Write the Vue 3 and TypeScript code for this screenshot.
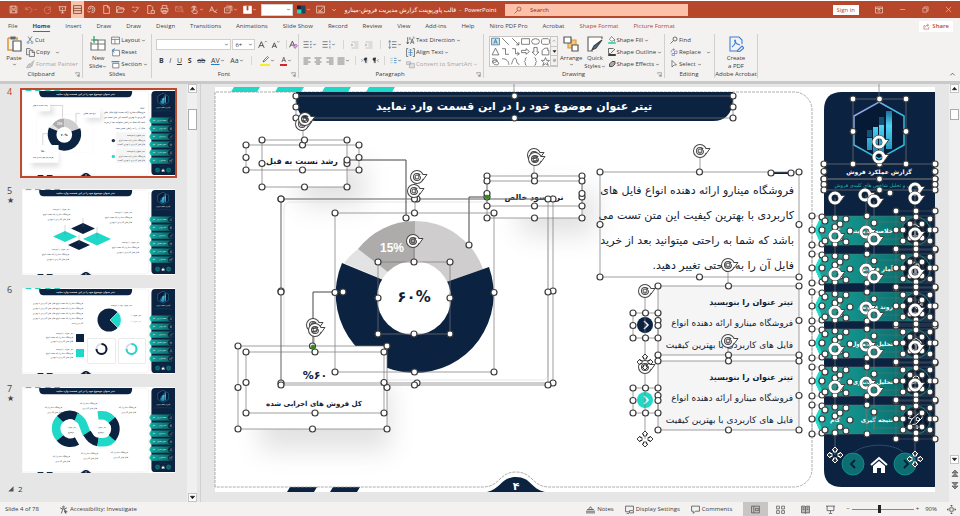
<script setup lang="ts">
import { h, type FunctionalComponent } from 'vue'

type Shape = [d: string, stroke?: string, fill?: string, width?: number]

const N = 'none'
const blue = '#2b7cc4'
const icons: Record<string, Shape[]> = {
  caret: [['M4 6l4 4 4-4', 'currentColor', N, 2]],
  chevUp: [['M3 10l5-5 5 5', 'currentColor', N, 1.6]],
  save: [['M2 2h11l1 1v11H2zM5 2v5h6V2M4 14v-5h8v5']],
  undo: [['M3 3v5h5M3 8c2-4 9-5 11 0 0 3-2 5-4 6']],
  redo: [['M13 3v5h-4M13 6a6 6 0 1 0 1 4']],
  present: [['M1 3h14M3 3v7h10V3M8 10v4M5 14h6M8 5v3']],
  rows: [['M1 1h14v14H1zM1 6h14M1 10h14', '#5a2a1a']],
  swirl: [['M8 8m-6 0a6 6 0 1 1 6 6M8 8m-3 0a3 3 0 1 1 3 3M1 10l2 3 3-2']],
  page: [['M3 1h7l3 3v11H3zM10 1v4h3']],
  folder: [['M1 13V3h5l1 2h6v2M1 13l3-6h11l-3 6z']],
  check: [['M2 4h4M8 4h4M3 9l4 4 7-9']],
  docs: [['M3 1h6l3 3v5M3 1v14h5M9 10h6v5H9z']],
  printer: [['M4 6V1h8v5M2 6h12v6H2zM5 10h6v5H5z']],
  mail: [['M1 3h11v8H1zM1 3l6 5 5-5M14 8v6']],
  touch: [['M6 15c-5-5-3-6 0-4V4c0-2 2-2 2 0v5c5 0 6 1 4 6zM3 6a4 4 0 1 1 8 0']],
  ab: [['M1 12l4-9 4 9M3 9h4M10 13l4-5M9 11l5 3']],
  album: [['M1 5h10v9H1zM4 2h10v9M4 9h4M11 5V2']],
  whitebox: [['M1 2h14v13H1z', '#fff', '#fff'], ['M7 2h2v7H7z', '#b7472a', '#b7472a']],
  theme: [['M0 1h8v7H0z', N, '#1a1f2c'], ['M0 8h8v7H0z', N, '#1fd3c5'], ['M8 1h7v14H8z', N, '#1f4358']],
  boxcheck: [['M1 2h14v12H1zM4 8l3 3 6-7M4 12h8']],
  ribbonmode: [['M1 2h14v12H1zM1 5h14M8 13V7M5 9l3-3 3 3']],
  min: [['M2 8h12']],
  restore: [['M2 5h9v9H2zM5 5V2h9v9h-3']],
  close: [['M2 2l12 12M14 2L2 14']],
  find: [['M10 2a4 4 0 1 1 0 8 4 4 0 0 1 0-8M7 9l-6 6', '#3b3a39', N, 1.4]],
  searchR: [['M10 2a4 4 0 1 1 0 8 4 4 0 0 1 0-8M7 9l-6 6', '#8a3420', N, 1.2]],
  share: [['M5 6H2v8h11V9M5 10c0-4 3-5 7-5M9 2l4 3-4 3', '#b7472a']],
  paste: [['M2 2h9v2M2 2v12h5', '#e09a3c', N, 1.6], ['M5 1h4v2H5z', '#666', '#666'], ['M7 5h8v10H7z', '#555', '#fff']],
  cut: [['M4 1l7 10M12 1L5 11', '#444'], ['M2 13a2 2 0 1 1 4 0 2 2 0 0 1-4 0M10 13a2 2 0 1 1 4 0 2 2 0 0 1-4 0', blue]],
  copy: [['M5 12H1V1h6l2 2M6 4h6l3 3v8H6zM11 4v4h4', '#444']],
  painter: [['M14 1L8 7l-4 1-3 6 7-1 3-3zM6 6l5 5', '#aaa', '#ccc']],
  newslide: [['M3 4h12v10H1V6', '#777', '#fff'], ['M1 8h14M8 4v10', '#777'], ['M4 0v7M1 4h7', '#2e9b63', N, 1.2]],
  layout: [['M1 2h14v12H1zM1 6h14M7 6v8', '#555', '#fff']],
  reset: [['M3 4h12v10H3z', '#555', '#fff'], ['M7 1L2 4l4 4', blue, N, 1.6]],
  section: [['M3 6h11v8H3z', '#555', '#fff'], ['M1 3h14', blue, N, 2]],
  growA: [['M1 14L6 3l5 11M3 10h6', '#333', N, 1.4], ['M12 4l2-2 2 2', blue]],
  shrinkA: [['M2 14L6 5l4 9M3 11h6', '#333', N, 1.4], ['M11 2l2 2 2-2', blue]],
  clearA: [['M1 13L6 2l5 11M3 9h6', '#333', N, 1.4], ['M8 12l4-5 3 3-4 5z', '#9b4fb0', '#d9a8e4']],
  bullets: [['M1 3h9M1 8h9M1 13h9', '#666', N, 1.4], ['M13 3h2M13 8h2M13 13h2', blue, N, 2.4]],
  numbers: [['M1 3h9M1 8h9M1 13h9', '#666', N, 1.4], ['M14 1v4M13 8h2M14 11v4', blue, N, 1.4]],
  indent: [['M1 2h14M7 6h8M7 10h8M1 14h14M1 6v4l3-2z', '#aaa']],
  spacing: [['M7 3h8M7 8h8M7 13h8', '#666', N, 1.4], ['M3 1v14M1 4l2-3 2 3M1 12l2 3 2-3', blue]],
  alignL: [['M1 2h14M1 6h9M1 10h14M1 14h9', '#555', N, 1.4]],
  alignC: [['M1 2h14M4 6h8M1 10h14M4 14h8', '#555', N, 1.4]],
  alignR: [['M1 2h14M6 6h9M1 10h14M6 14h9', '#555', N, 1.4]],
  alignJ: [['M1 2h14M1 6h14M1 10h14M1 14h14', '#555', N, 1.4]],
  ltr: [['M1 5l3 3-3 3', blue, N, 1.6], ['M10 14V2h4M13 2v12M10 2a3 3 0 0 0 0 6', '#333', '#333']],
  rtl: [['M15 5l-3 3 3 3', blue, N, 1.6], ['M5 14V2h4M8 2v12M5 2a3 3 0 0 0 0 6', '#333', '#333']],
  columns: [['M1 3h5M1 8h5M1 13h5', '#9bb', N, 1.6], ['M9 3h6M9 8h6M9 13h6', blue, N, 1.6]],
  textdir: [['M3 2v12M1 11l2 3 2-3M7 2v5', '#444', N, 1.3], ['M8 14l3-9 3 9M9 11h4', '#444'], ['M12 1l3 2-3 2', blue]],
  aligntext: [['M4 1H1v14h3M12 1h3v14h-3', '#444'], ['M8 2v12M5 5l3-3 3 3M5 11l3 3 3-3M4 8h8', blue]],
  smartart: [['M1 3h7v5H1zM6 6h9v8H6z', '#aaa', '#ddd']],
  arrange: [['M5 4h8v8H5z', '#e09a3c', '#f6c877'], ['M1 1h7v6H1zM9 9h6v6H9z', '#555', '#fff']],
  quick: [['M15 3v-2H1v14h5', '#666', '#fff'], ['M15 4L9 12l-4 2 2-4z', '#444', blue]],
  fill: [['M7 1l6 6-5 4-5-4zM13 7v4', '#444', '#fff'], ['M1 13h14v2H1z', '#1fd3a5', '#1fd3a5']],
  outline: [['M1 1h10M1 1v10h4M14 2L6 10', '#333', N, 1.4], ['M1 13h14v2H1z', '#111', '#111']],
  marker: [['M13 1L6 8l-2 4 4-2 7-7z', '#444', '#fff', 1.4]],
  effects: [['M3 8l5-5h6v5l-5 5H3z', '#333', '#aaa', 1.6]],
  replace: [['M2 9c0-5 3-6 6-6M6 1l3 2-3 2', blue], ['M9 6h5v5H9z', '#9b4fb0'], ['M4 11h5v4H4z', blue]],
  select: [['M4 1v13l4-4h5z', '#333', '#fff']],
  pdf: [['M14 8V4l-3-3H2v14h7M4 11c4-3 4-7 3-7s0 4 5 5M9 15l5-5 2 2-5 4z', '#3f7fd6', N, 1.1]],
  textbox: [['M1 2h14v12H1z', '#255f85', '#cfe6f2'], ['M5 12l3-8 3 8M6 9h4', '#255f85']],
  line: [['M2 2l12 12', '#444']],
  lineArrow: [['M2 2l12 12M14 9v5H9', '#444']],
  rect: [['M1 3h14v10H1z', '#444']],
  oval: [['M1 8a7 5 0 1 0 14 0 7 5 0 1 0-14 0', '#444']],
  round: [['M3 3h10l2 2v6l-2 2H3l-2-2V5z', '#444']],
  tri: [['M8 2l6 12H2z', '#444']],
  elbow: [['M2 3h6v10h6', '#444']],
  elbowA: [['M2 3h6v9h6M11 9l4 3-4 3', '#444']],
  arrR: [['M1 6h8V3l6 5-6 5v-3H1z', '#444']],
  arrD: [['M5 1h6v8h3l-6 6-6-6h3z', '#444']],
  blob: [['M2 6l5-4h5v4h2v8H2z', '#444']],
  scrib: [['M2 3c8 0 12 3 6 6s-6-5 0-3 8 8 2 8-8-4-7-8', '#444']],
  curve: [['M2 3c8 0 12 5 12 11', '#444']],
  arch: [['M1 13C5-2 9 0 10 8c1 5 4 5 5 5', '#444']],
  braceL: [['M10 1c-4 0-1 6-4 7 3 1 0 7 4 7', '#444']],
  braceR: [['M6 1c4 0 1 6 4 7-3 1 0 7-4 7', '#444']],
  star: [['M8 1l2 5h5l-4 4 2 5-5-3-5 3 2-5-4-4h5z', '#444']],
  more: [['M3 4h10M4 8l4 5 4-5z', '#444']],
  launch: [['M2 6V2h12v12h-4M5 7l6 6M11 8v5H6', '#555', N, 1.4]],
  access: [['M8 2a1.500 1.500 0 1 1 0 3 1.500 1.500 0 0 1 0-3M2 5l4 2v3l-2 5M14 5l-4 2v3l2 5M6 7h4M9 12h6M12 9v6', '#444', N, 1.4]],
  notes: [['M0 11h16M0 14h16M5 7l3-4 3 4M2 8h12', '#444', N, 1.4]],
  display: [['M1 2h14v7M1 2v10h6M8 14h7v-4H8zM3 15h4', '#444', N, 1.3]],
  comment: [['M1 2h14v9H8l-4 4v-4H1z', '#444', N, 1.3]],
  normal: [['M1 2h14v12H1zM5 2v12M8 6h5v4H8z', '#444', N, 1.2]],
  grid: [['M1 2h5v5H1zM10 2h5v5h-5zM1 10h5v5H1zM10 10h5v5h-5z', '#444', N, 1.2]],
  book: [['M1 2h6l1 1 1-1h6v12H9l-1 1-1-1H1zM8 3v12M3 5h3M3 8h3M10 5h3M10 8h3', '#444', '#bbb', 1.2]],
  show: [['M0 2h16M2 2v8h12V2M8 10v4M5 15h6', '#444', N, 1.3]],
  fit: [['M5 5h6v6H5zM8 0v3M6 2l2-2 2 2M8 16v-3M6 14l2 2 2-2M0 8h3M2 6L0 8l2 2M16 8h-3M14 6l2 2-2 2', '#444', N, 1.3]],
  up: [['M3 11l5-6 5 6z', '#111', '#111']],
  down: [['M3 5l5 6 5-6z', '#111', '#111']],
  dblUp: [['M2 8l6-6 6 6zM2 15l6-6 6 6z', '#444', '#888']],
  dblDown: [['M2 1l6 6 6-6zM2 8l6 6 6-6z', '#444', '#888']],
  fold: [['M14 2v12H2z', '#555', '#555']],
}

const Icon: FunctionalComponent<{ n: string; s?: number }> = (p) =>
  h('svg', { viewBox: '0 0 16 16', width: p.s ?? 9, height: p.s ?? 9, 'aria-hidden': 'true' },
    (icons[p.n] ?? []).map(([d, stroke, fill, w]) =>
      h('path', { d, stroke: stroke ?? 'currentColor', fill: fill ?? 'none', 'stroke-width': w ?? 1.2 })))
Icon.props = ['n', 's']

const tabs = ['File', 'Home', 'Insert', 'Draw', 'Draw', 'Design', 'Transitions', 'Animations', 'Slide Show', 'Record',
  'Review', 'View', 'Add-ins', 'Help', 'Nitro PDF Pro', 'Acrobat', 'Shape Format', 'Picture Format']

const gallery = ['textbox', 'line', 'lineArrow', 'rect', 'oval', 'round', 'tri', 'elbow', 'elbowA', 'arrR', 'arrD', 'blob',
  'scrib', 'curve', 'arch', 'braceL', 'braceR', 'star']

const menu = ['خلاصه مدیریتی', 'آمار فروش', 'روند فروش', 'تحلیل محصول', 'تحلیل مشتری', 'نتیجه گیری']
  .map((label, i) => ({ label, y: 216 + Math.round(i * 37.8) }))
const glyphs = [
  'M-5 4v-5M-1 4v-8M3 4v-6M-6 5h12M-5-5l4-2 4 3 4-3',
  'M-6 5h12M-4 4v-6h3v6M0 4v-9h3v9M-6-4l5-3',
  'M-6 4l4-5 3 3 5-7M2-5h4v4M-6 6h12',
  'M-5-2l5-4 5 4v6l-5 3-5-3zM-5-2l5 3 5-3M0 1v6',
  'M-3-3a3 3 0 1 1 6 0 3 3 0 0 1-6 0M-6 6c0-7 12-7 12 0zM4-6l3 2',
  'M-7 5l3-6 6-5 5-1-1 5-6 6zM-4-1l-4-1 4-3M1 5l0 4 4-5M1-3l3 2-2 2-2-1z',
]

type Box = [number, number, number, number]
type Point = [number, number]
const boxes: Box[] = [
  [296, 96, 437, 22], [246, 145, 113, 25], [262, 140, 85, 47], [281, 199, 272, 184], [281, 199, 267, 186],
  [335, 213, 159, 159], [378, 262, 72, 72], [487, 176, 95, 42], [487, 181, 95, 25], [238, 346, 149, 83],
  [246, 352, 138, 61], [600, 172, 199, 105], [658, 286, 141, 69], [658, 361, 141, 69],
  [633, 313, 25, 25], [633, 388, 25, 25], [853, 99, 53, 65], [824, 164, 111, 15], [824, 179, 111, 11],
]
const edge = (b: Box): Point[] => {
  const [x, y, w, hh] = b
  return [[x, y], [x + w / 2, y], [x + w, y], [x, y + hh / 2], [x + w, y + hh / 2], [x, y + hh], [x + w / 2, y + hh], [x + w, y + hh]]
}
const rowBoxes: Box[] = menu.flatMap(({ y }): Box[] => [
  [812, y, 55, 29], [822, y + 1, 27, 28], [825, y + 5, 15, 20], [867, y, 68, 29], [874, y + 6, 42, 17],
  [896, y - 5, 39, 39], [903, y + 3, 27, 24], [909, y + 8, 14, 14],
])
const rowColumns: [number, number[]][] = [
  [812, [0, 14, 29]], [822, [1, 14, 28]], [825, [5, 25]], [835, [2, 11, 28]], [840, [8, 22]], [846, [3, 26]], [850, [15]],
  [867, [0, 29]], [874, [7]], [896, [-5, 14, 34]], [903, [3, 14, 25]], [910, [8, 22]], [916, [-5, 1, 28, 34]],
  [922, [8, 22]], [930, [3, 14, 25]], [935, [-5, 14, 34]],
]
const rowPoints: Point[] = menu.flatMap(({ y }) => rowColumns.flatMap(([x, ys]) => ys.map((d): Point => [x, y + d])))
const loose: Point[] = [[347, 160], [406, 218], [469, 245], [343, 292], [771, 173], [791, 173], [890, 193]]
const handles: Point[] = [...boxes.flatMap(edge), ...rowPoints, ...loose]
const turns: [number, number, boolean][] = [
  [302, 124, false], [305, 119, false], [417, 177, false], [414, 191, false], [413, 241, false], [534, 155, false],
  [535, 159, false], [700, 151, false], [728, 265, false], [728, 341, false], [645, 291, false], [645, 367, false],
  [313, 325, false], [315, 330, false], [879, 142, true], [879, 157, true], [835, 198, true], [865, 195, true],
  [874, 201, true], [915, 189, true], [915, 198, true],
  ...menu.slice(0, 5).flatMap(({ y }): [number, number, boolean][] => [
    [835, y + 20, true], [866, y + 16, true], [874, y + 23, true], [915, y + 18, true]]),
]
const stems = ['M303 124V145', 'M415 177V213', 'M414 241V262', 'M534 159V176', 'M700 151V172', 'M728 265V286', 'M728 341V361',
  'M645 291V439', 'M314 330V352', 'M514 84V96', 'M879 84V99', 'M835 198V455', 'M866 195V420', 'M874 201V430', 'M915 189V459']
const moves: [number, number, boolean][] = [[645, 362, false], [645, 439, false], [835, 455, true], [915, 459, true]]

const para = ['فروشگاه مینارو ارائه دهنده انواع فایل های', 'کاربردی با بهترین کیفیت این متن تست می',
  'باشد  که شما به راحتی میتوانید بعد از خرید', 'فایل آن را به راحتی تغییر دهید.']
const cards = [{ y: 286, c: '#0b2341' }, { y: 361, c: '#1fd8c8' }]

const note = ['تیتر عنوان را بنویسید', 'فروشگاه مینارو ارائه دهنده انواع', 'فایل های کاربردی با بهترین']
const notes5: Point[] = [[48, 21], [110, 24], [117, 54], [47, 61]]
const notes7: Point[] = [[40, 21], [75, 17], [114, 21], [48, 70], [76, 67], [106, 66]]
const long6 = 'فروشگاه مینارو ارائه دهنده انواع فایل های کاربردی با بهترین'
const thumbs = [
  { n: 4, star: false }, { n: 5, star: true }, { n: 6, star: false }, { n: 7, star: true },
]
</script>

<template>
  <div class="app">
    <header class="titlebar">
      <div class="qat">
        <button aria-label="Save"><Icon n="save" /></button>
        <button class="dim" aria-label="Undo"><Icon n="undo" /><Icon n="caret" :s="5" /></button>
        <button class="dim" aria-label="Redo"><Icon n="redo" /></button>
        <button aria-label="From beginning"><Icon n="present" /></button>
        <button class="on" aria-label="Rows"><Icon n="rows" /></button>
        <button v-for="k in ['swirl', 'page', 'folder', 'check', 'docs', 'printer']" :key="k" :aria-label="k"><Icon :n="k" /></button>
        <button class="dim" aria-label="Mail"><Icon n="mail" /></button>
        <button aria-label="Touch mode"><Icon n="touch" /><Icon n="caret" :s="5" /></button>
        <button aria-label="Spelling"><Icon n="ab" /></button>
        <button aria-label="Album"><Icon n="album" /><Icon n="caret" :s="5" /></button>
        <button aria-label="Shape"><Icon n="whitebox" /><Icon n="caret" :s="5" /></button>
        <span class="combo qcombo"><select aria-label="Style"><option></option></select><Icon n="caret" :s="5" /></span>
        <button aria-label="Theme"><Icon n="theme" /><Icon n="caret" :s="5" /></button>
        <button aria-label="Options"><Icon n="boxcheck" /></button>
        <button aria-label="Customize"><Icon n="caret" :s="6" /></button>
      </div>
      <div class="doc"><bdi>قالب پاورپوینت گزارش مدیریت فروش-مینارو</bdi><span> &nbsp;-&nbsp; PowerPoint</span></div>
      <label class="search"><Icon n="searchR" :s="8" /><input type="text" aria-label="Search" placeholder="Search" /></label>
      <div class="win">
        <button class="sign">Sign in</button>
        <button aria-label="Ribbon display"><Icon n="ribbonmode" :s="8" /></button>
        <button aria-label="Minimize"><Icon n="min" :s="7" /></button>
        <button aria-label="Restore"><Icon n="restore" :s="7" /></button>
        <button aria-label="Close"><Icon n="close" :s="7" /></button>
      </div>
    </header>

    <nav class="tabs">
      <a v-for="(t, i) in tabs" :key="i" href="#" :class="{ cur: i === 1, ctx: i > 15 }">{{ t }}</a>
      <button class="share"><Icon n="share" :s="7" />Share</button>
    </nav>

    <section class="ribbon" aria-label="Home">
      <div class="group clip">
        <div class="tools">
          <button class="big"><Icon n="paste" :s="16" /><span>Paste</span><Icon n="caret" :s="5" /></button>
          <div class="stack">
            <button><Icon n="cut" :s="8" />Cut</button>
            <button><Icon n="copy" />Copy<Icon class="far" n="caret" :s="5" /></button>
            <button class="off"><Icon n="painter" />Format Painter</button>
          </div>
        </div>
        <footer>Clipboard<Icon class="launch" n="launch" :s="5" /></footer>
      </div>
      <div class="group slides">
        <div class="tools">
          <button class="big"><Icon n="newslide" :s="16" /><span>New</span><span>Slide<Icon n="caret" :s="5" /></span></button>
          <div class="stack">
            <button><Icon n="layout" />Layout<Icon n="caret" :s="5" /></button>
            <button><Icon n="reset" />Reset</button>
            <button><Icon n="section" />Section<Icon n="caret" :s="5" /></button>
          </div>
        </div>
        <footer>Slides</footer>
      </div>
      <div class="group font">
        <div class="lines">
          <div class="row">
            <span class="combo fname"><select aria-label="Font"><option></option></select><Icon n="caret" :s="5" /></span>
            <span class="combo fsize"><select aria-label="Font size"><option>6+</option></select><Icon n="caret" :s="5" /></span>
            <button class="wide" aria-label="Grow font"><Icon n="growA" /></button>
            <button class="wide" aria-label="Shrink font"><Icon n="shrinkA" /></button>
            <i class="bar"></i>
            <button aria-label="Clear formatting"><Icon n="clearA" /></button>
          </div>
          <div class="row fmt">
            <button><b>B</b></button><button><em>I</em></button><button><u>U</u></button><button><b>S</b></button>
            <button><s>ab</s></button>
            <button class="av">AV<Icon n="caret" :s="5" /></button>
            <button>Aa<Icon n="caret" :s="5" /></button>
            <i class="bar"></i>
            <button aria-label="Highlight"><span class="hl"><Icon n="marker" :s="8" /></span><Icon n="caret" :s="5" /></button>
            <button><span class="col">A</span><Icon n="caret" :s="5" /></button>
          </div>
        </div>
        <footer>Font<Icon class="launch" n="launch" :s="5" /></footer>
      </div>
      <div class="group par">
        <div class="tools">
          <div class="lines">
            <div class="row">
              <button aria-label="Bullets"><Icon n="bullets" /><Icon n="caret" :s="5" /></button>
              <button aria-label="Numbering"><Icon n="numbers" /><Icon n="caret" :s="5" /></button>
              <i class="bar"></i>
              <button aria-label="Outdent"><Icon n="indent" :s="8" /></button>
              <button aria-label="Indent"><Icon n="indent" :s="8" /></button>
              <i class="bar"></i>
              <button aria-label="Line spacing"><Icon n="spacing" /><Icon n="caret" :s="5" /></button>
            </div>
            <div class="row">
              <button aria-label="Left"><Icon n="alignL" :s="8" /></button>
              <button aria-label="Center"><Icon n="alignC" :s="8" /></button>
              <button aria-label="Right"><Icon n="alignR" :s="8" /></button>
              <button aria-label="Justify"><Icon n="alignJ" :s="8" /><Icon n="caret" :s="5" /></button>
              <i class="bar"></i>
              <button aria-label="Left to right"><Icon n="ltr" :s="7" /></button>
              <button aria-label="Right to left"><Icon n="rtl" :s="7" /></button>
              <i class="bar"></i>
              <button aria-label="Columns"><Icon n="columns" :s="7" /><Icon n="caret" :s="5" /></button>
            </div>
          </div>
          <div class="stack">
            <button><Icon n="textdir" />Text Direction<Icon n="caret" :s="5" /></button>
            <button><Icon n="aligntext" />Align Text<Icon n="caret" :s="5" /></button>
            <button class="off"><Icon n="smartart" />Convert to SmartArt<Icon n="caret" :s="5" /></button>
          </div>
        </div>
        <footer>Paragraph<Icon class="launch" n="launch" :s="5" /></footer>
      </div>
      <div class="group draw">
        <div class="tools">
          <div class="gallery">
            <div class="shapes"><button v-for="g in gallery" :key="g" :aria-label="g"><Icon :n="g" :s="9" /></button></div>
            <div class="gscroll">
              <button aria-label="Previous shapes"><Icon n="chevUp" :s="4" /></button>
              <button aria-label="Next shapes"><Icon n="down" :s="5" /></button>
              <button aria-label="More shapes"><Icon n="more" :s="5" /></button>
            </div>
          </div>
          <button class="big"><Icon n="arrange" :s="16" /><span>Arrange</span><Icon n="caret" :s="5" /></button>
          <button class="big"><Icon n="quick" :s="16" /><span>Quick</span><span>Styles<Icon n="caret" :s="5" /></span></button>
          <div class="stack">
            <button><Icon n="fill" :s="8" />Shape Fill<Icon n="caret" :s="5" /></button>
            <button><Icon n="outline" :s="8" />Shape Outline<Icon n="caret" :s="5" /></button>
            <button><Icon n="effects" :s="8" />Shape Effects<Icon n="caret" :s="5" /></button>
          </div>
        </div>
        <footer>Drawing<Icon class="launch" n="launch" :s="5" /></footer>
      </div>
      <div class="group edit">
        <div class="stack">
          <button><Icon n="find" :s="8" />Find</button>
          <button><Icon n="replace" :s="8" />Replace<Icon class="far" n="caret" :s="5" /></button>
          <button><Icon n="select" :s="8" />Select<Icon n="caret" :s="5" /></button>
        </div>
        <footer>Editing</footer>
      </div>
      <div class="group acro">
        <button class="big"><Icon n="pdf" :s="16" /><span>Create</span><span>a PDF</span></button>
        <footer>Adobe Acrobat</footer>
      </div>
      <button class="collapse" aria-label="Collapse ribbon"><Icon n="chevUp" :s="7" /></button>
    </section>

    <main class="work">
      <aside class="panel" aria-label="Slides">
        <ol>
          <li v-for="t in thumbs" :key="t.n" :class="{ sel: t.n === 4 }">
            <div class="num">{{ t.n }}<small v-if="t.star">★</small></div>
            <svg class="thumb" viewBox="215 87 720 405">
              <rect x="215" y="87" width="720" height="405" fill="#fff" />
              <use href="#frame" />
              <use v-if="t.n === 4" href="#content" />
              <g v-else transform="translate(215 87) scale(4.706)" class="tiny">
                <template v-if="t.n === 5">
                  <path d="M61 34l12 5.500-12 5.500-12-5.500zM57 51l11 5-11 5-11-5z" fill="#0b2341" />
                  <path d="M43 42l12 5.500-12 5.500-12-5.500zM75 43.500l14 6.500-14 6.500-14-6.500z" fill="#1fd8c8" />
                  <path d="M61 29v9M43 36v10M75 38v11M57 46v9" stroke="#777" stroke-width=".3" />
                  <template v-for="([x, y], i) in notes5" :key="i">
                    <text v-for="(s, j) in note" :key="j" :x="x" :y="y + j * 5">{{ s }}</text>
                  </template>
                </template>
                <template v-if="t.n === 6">
                  <circle cx="87" cy="32" r="11.500" fill="#0b2341" />
                  <path d="M88 32l8-8a11.500 11.500 0 0 1 0 16z" fill="#1fd8c8" stroke="#fff" stroke-width=".6" />
                  <text v-for="j in 5" :key="j" x="61" :y="11 + j * 5">{{ j < 5 ? long6 : 'کاربردی است' }}</text>
                  <text x="110" y="18">تیتر عنوان خود را بنویسید</text>
                  <text x="119" y="28">تیتر عنوان ۱</text>
                  <text class="t" x="119" y="34">تیتر عنوان ۲</text>
                  <rect x="54" y="46" width="8" height="8" fill="#0b2341" /><rect x="54" y="61" width="8" height="8" fill="#1fd8c8" />
                  <template v-for="y in [46, 62]" :key="y">
                    <text v-for="(s, j) in note" :key="j" x="51" :y="y + j * 4">{{ s }}</text>
                  </template>
                  <g fill="none"><rect x="65.500" y="50.500" width="28" height="25" rx="1" stroke="#ccc" stroke-width=".4" />
                    <rect x="96.500" y="50.500" width="27" height="25" rx="1" stroke="#ccc" stroke-width=".4" />
                    <circle cx="79.500" cy="61" r="5" stroke="#d9d9ec" stroke-width="2" /><circle cx="109.500" cy="61" r="5" stroke="#d9d9ec" stroke-width="2" />
                    <path d="M79.500 56a5 5 0 1 1-5 5" stroke="#111a2e" stroke-width="2" /><path d="M109.500 56a5 5 0 1 1-5 5" stroke="#1fd8c8" stroke-width="2" /></g>
                </template>
                <template v-if="t.n === 7">
                  <g fill="none" stroke-width="8.500">
                    <path d="M38 51a13.500 13.500 0 0 1 0-19" stroke="#1fd8c8" />
                    <path d="M38 32a13.500 13.500 0 0 1 17-2M38 51a13.500 13.500 0 0 0 17 3" stroke="#0b2341" />
                    <path d="M54 30c8 3 7 10 11 17" stroke="#1fd8c8" /><path d="M65 46c3 5 5 8 11 9" stroke="#0b2341" />
                    <path d="M76 28.500c8-1 13 2 15 7M76 55c8 1 13-1 15-5" stroke="#1fd8c8" />
                    <path d="M90 33a13.500 13.500 0 0 1 0 18" stroke="#0b2341" />
                  </g>
                  <text x="54" y="41">تیتر عنوان</text><text x="52" y="46">موضوع</text>
                  <text x="84" y="41">تیتر عنوان</text><text x="82" y="46">موضوع</text>
                  <template v-for="([x, y], i) in notes7" :key="i">
                    <text :x="x" :y="y">فروشگاه مینارو ارائه</text><text :x="x" :y="y + 5">فایل های کاربردی</text>
                  </template>
                </template>
              </g>
            </svg>
          </li>
        </ol>
        <div class="sectionrow"><Icon n="fold" :s="6" />2</div>
      </aside>
      <div class="scroll left">
        <button aria-label="Scroll up"><Icon n="up" :s="7" /></button><i class="grip tall"></i>
        <button class="end" aria-label="Scroll down"><Icon n="down" :s="7" /></button>
      </div>

      <div class="stage">
        <svg class="slide" viewBox="215 87 720 405" role="img" aria-label="Slide 4">
          <defs>
            <filter id="blur" x="-50%" y="-50%" width="200%" height="200%"><feGaussianBlur stdDeviation="13" /></filter>
            <linearGradient id="hex" x1="0" y1="0" x2="1" y2="1"><stop offset="0" stop-color="#b9a0e8" /><stop offset=".5" stop-color="#3fb7dd" /><stop offset="1" stop-color="#25c0dc" /></linearGradient>
            <linearGradient id="bars" x1="0" y1="0" x2="0" y2="1"><stop offset="0" stop-color="#1e6f98" /><stop offset=".35" stop-color="#4fd4f2" /><stop offset="1" stop-color="#1d8cb8" /></linearGradient>
            <linearGradient id="teal"><stop offset="0" stop-color="#17a89f" /><stop offset="1" stop-color="#096767" /></linearGradient>
            <g id="frame">
              <path d="M234 87h26l-3 5h-26zM278 87h26l-3 5h-26zM325 87h26l-3 5h-26zM369 87h26l-3 5h-26z" fill="#1fd8c8" />
              <path d="M290 487h27l-3 5h-27zM333 487h27l-3 5h-27z" fill="#0b2341" />
              <path d="M215 487V92H794a18 18 0 0 1 18 18V469a18 18 0 0 1-18 18H549c-17 0-16-15-33-15s-16 15-33 15z" fill="none" stroke="#999" stroke-dasharray="3 1" stroke-width=".8" />
              <path d="M487 492c14-3 14-15 29-15s15 12 29 15z" fill="#0b2341" />
              <text class="w b mid" x="516" y="490" font-size="11">۴</text>
              <path d="M296 92h437v9q-2 20-20 20H316q-18 0-20-20z" fill="#0b2341" />
              <text class="w b mid" x="514" y="110" font-size="11">تیتر عنوان موضوع خود را در این قسمت وارد نمایید</text>
              <path d="M935 92H842q-18 0-18 18V470q0 17 18 17h93z" fill="#0b2341" />
              <path d="M879 102l25 14v29l-25 14-25-14v-29z" fill="#061a35" stroke="url(#hex)" stroke-width="1.500" />
              <path d="M867 138h5v12h-5zM873 127h5v26h-5zM879 125h5v28h-5zM886 111h6v38h-6z" fill="url(#bars)" />
              <path d="M867 130h5v7h-5zM879 117h5v8h-5z" fill="#155277" />
              <text class="w b mid" x="879" y="174" font-size="6">گزارش عملکرد فروش</text>
              <text class="t mid" x="878" y="187" font-size="5">بررسی و تحلیل شاخص های کلیدی فروش</text>
              <g v-for="(m, i) in menu" :key="i">
                <path :d="`M826 ${m.y}h90v29h-90q-5 0-7-5l-3-7q-1-3 0-5l3-7q2-5 7-5z`" fill="url(#teal)" />
                <path :d="`M821 ${m.y + 4}l-5 10 5 11`" fill="none" stroke="#23d9ca" stroke-width="3" />
                <text class="w b" x="893" :y="m.y + 17" font-size="6">{{ m.label }}</text>
                <text class="w b mid" x="835" :y="m.y + 17" font-size="6">گام</text>
                <circle cx="916" :cy="m.y + 15" r="14" fill="#081b33" stroke="#168b90" />
                <path :transform="`translate(916 ${m.y + 15})`" :d="glyphs[i]" fill="none" stroke="#fff" />
              </g>
              <path d="M855 452c10-9 38-9 48 0" fill="none" stroke="#3a5a7a" stroke-width=".7" />
              <g fill="#0c6e70" stroke="#168b90"><circle cx="853" cy="464" r="11" /><circle cx="905" cy="464" r="11" /></g>
              <path d="M855 460l-4 4 4 4M904 460l4 4-4 4" fill="none" stroke="#082036" stroke-width="1.800" />
              <path d="M871 465l8-7 8 7" fill="none" stroke="#fff" stroke-width="2" /><path d="M873 466l6-5 6 5v7h-4v-5h-4v5h-4z" fill="#fff" />
            </g>
            <g id="content">
              <g fill="#555" opacity=".17" filter="url(#blur)">
                <rect x="300" y="165" width="65" height="40" /><rect x="520" y="190" width="75" height="45" /><rect x="260" y="385" width="130" height="65" />
                <rect x="270" y="395" width="110" height="50" />
              </g>
              <rect x="284" y="202" width="264" height="178" rx="6" fill="none" stroke="#ddd" stroke-width=".7" />
              <path d="M262 140h85v47h-85zM487 176h95v42h-95z" fill="#fff" />
              <path d="M415 293L344 263A76 76 0 0 1 358 249z" fill="#e4e3e3" />
              <path d="M415 293L358 249A72 72 0 0 1 415 221z" fill="#aeabab" />
              <path d="M415 293V221A72 72 0 0 1 483 269z" fill="#cfcdcd" />
              <path d="M415 293L489 267A79 79 0 1 1 342 263z" fill="#0b2341" />
              <circle cx="414" cy="298" r="37" fill="#fff" />
              <rect x="238" y="346" width="149" height="83" rx="2" fill="#fff" />
              <text x="392" y="252" class="w pct" font-size="12">15%</text>
              <text class="b mid" x="414" y="302" font-size="15">۶۰%</text>
              <text class="b mid" x="315" y="379" font-size="11">%۶۰</text>
              <text class="b mid" x="302" y="164" font-size="8">رشد نسبت به قبل</text>
              <text class="b mid" x="534" y="200" font-size="8">نرخ سود خالص</text>
              <text class="b mid" x="314" y="406" font-size="7">کل فروش های اجرایی شده</text>
              <path d="M347 160h59v58M487 197h-18v48M343 292h-30v54" fill="none" stroke="#444" />
              <path d="M771 173h20" stroke="#0b2341" stroke-width="2" />
              <text v-for="(s, i) in para" :key="i" x="794" :y="194 + i * 25" font-size="11">{{ s }}</text>
              <g v-for="c in cards" :key="c.y">
                <rect x="658" :y="c.y" width="141" height="69" fill="#f5f5f5" />
                <text class="b" x="793" :y="c.y + 19" font-size="8">تیتر عنوان را بنویسید</text>
                <text x="793" :y="c.y + 40" font-size="9">فروشگاه مینارو ارائه دهنده انواع</text>
                <text x="793" :y="c.y + 62" font-size="9">فایل های کاربردی با بهترین کیفیت</text>
                <circle cx="645" :cy="c.y + 39" r="8" :fill="c.c" />
                <path :d="`M644 ${c.y + 35}l4 4-4 4`" fill="none" stroke="#fff" stroke-width="1.500" />
              </g>
            </g>
            <g id="turn">
              <circle r="5" fill="none" stroke="#444" class="ring-out" />
              <path d="M1.500-2.500h8.500L6 3z" fill="#fff" stroke="#444" />
              <circle r="5" fill="none" stroke="#fff" class="ring-in" />
              <circle r="2" fill="none" class="core" />
            </g>
            <path id="arrow" d="M-1.500-3v-2H-3L0-8l3 3H1.500v2z" />
          </defs>
          <rect x="215" y="87" width="720" height="405" fill="#fff" />
          <use href="#frame" />
          <use href="#content" />
          <g class="overlay">
            <rect v-for="([x, y, w, hh], i) in boxes" :key="'b' + i" :x="x" :y="y" :width="w" :height="hh" />
            <rect v-for="([x, y, w, hh], i) in rowBoxes" :key="'r' + i" class="faint" :x="x" :y="y" :width="w" :height="hh" />
            <path v-for="(d, i) in stems" :key="'s' + i" :d="d" />
            <circle v-for="([x, y], i) in handles" :key="'h' + i" :cx="x" :cy="y" r="3" class="handle" />
            <circle cx="487" cy="197" r="2" fill="#2f8a12" stroke="#2f8a12" /><circle cx="313" cy="347" r="2" fill="#2f8a12" stroke="#2f8a12" />
          </g>
          <use v-for="([x, y, inv], i) in turns" :key="'t' + i" href="#turn" :x="x" :y="y" :class="inv ? 'inv' : 'reg'" />
          <g v-for="([x, y, inv], i) in moves" :key="'m' + i" :transform="`translate(${x} ${y})`" :class="inv ? 'inv' : 'reg'" class="move">
            <use v-for="a in [0, 90, 180, 270]" :key="a" href="#arrow" :transform="`rotate(${a})`" />
          </g>
        </svg>
      </div>
      <div class="scroll right">
        <button aria-label="Scroll up"><Icon n="up" :s="7" /></button><i class="grip"></i>
        <button class="end" aria-label="Scroll down"><Icon n="down" :s="7" /></button>
        <button class="plain" aria-label="Previous slide"><Icon n="dblUp" :s="8" /></button>
        <button class="plain" aria-label="Next slide"><Icon n="dblDown" :s="8" /></button>
      </div>
    </main>

    <footer class="status">
      <span>Slide 4 of 78</span>
      <button class="acc"><Icon n="access" />Accessibility: Investigate</button>
      <div class="sright">
        <button><Icon n="notes" />Notes</button>
        <button><Icon n="display" />Display Settings</button>
        <button><Icon n="comment" />Comments</button>
        <div class="views">
          <button class="von" aria-label="Normal"><Icon n="normal" /></button>
          <button aria-label="Slide sorter"><Icon n="grid" /></button>
          <button aria-label="Reading view"><Icon n="book" /></button>
          <button aria-label="Slide show"><Icon n="show" /></button>
        </div>
        <div class="zoom">
          <button aria-label="Zoom out">−</button><input type="range" aria-label="Zoom" min="10" max="190" value="90" /><button aria-label="Zoom in">+</button>
          <span class="pc">90%</span><button aria-label="Fit slide"><Icon n="fit" /></button>
        </div>
      </div>
    </footer>
  </div>
</template>

<style>
body { background: #f3f2f1; }
</style>

<style scoped>
* { box-sizing: border-box; }
.app { min-height: 100vh; display: flex; flex-direction: column; font: 6px/8px "Open Sans", "DejaVu Sans", sans-serif; color: #3b3a39; background: #f3f2f1; border-top: 1px solid #fff; overflow: hidden; }
button { font: inherit; color: inherit; background: none; border: 0; padding: 0; margin: 0; display: flex; align-items: center; white-space: nowrap; }
svg { flex: none; }
.titlebar { display: flex; align-items: center; height: 17px; background: #b7472a; color: #fbe3da; padding-left: 7px; }
.qat { display: flex; align-items: center; justify-content: space-between; width: 332px; flex: none; height: 100%; }
.qat button { height: 17px; padding: 0 2px; }
.dim { opacity: .45; }
.qat .on { background: #f9c3ad; }
.combo { position: relative; display: flex; align-items: center; background: #fff; border: 1px solid #d2d0ce; color: #333; }
.combo select { appearance: none; border: 0; background: none; font: inherit; color: inherit; width: 100%; height: 100%; padding: 0 2px; }
.combo svg { position: absolute; right: 1px; }
.qcombo { width: 32px; height: 12px; }
.doc { width: 166px; flex: none; padding-right: 3px; text-align: center; white-space: nowrap; color: #fff; }
.search { flex: 0 1 183px; height: 12px; background: #fdc0a8; display: flex; align-items: center; gap: 8px; padding-left: 9px; }
.search input { border: 0; background: none; font: inherit; width: 100px; padding: 0; color: #7a2f1a; }
.search input::placeholder { color: #7a2f1a; opacity: 1; }
.win { margin-left: auto; display: flex; align-items: center; gap: 16px; padding-right: 8px; }
.sign { background: #fff; color: #b7472a; height: 10px; padding: 0 4px; }
.tabs { display: flex; align-items: center; gap: 15px; height: 16px; padding: 0 7px 0 8px; }
.tabs a { color: #444; text-decoration: none; white-space: nowrap; line-height: 10px; border-bottom: 1px solid transparent; }
.tabs .cur { font-weight: 700; border-color: #b7472a; }
.tabs .ctx { color: #b7472a; }
.share { margin-left: auto; background: #fff; color: #b7472a; font-weight: 600; gap: 2px; height: 11px; padding: 0 4px; }
.ribbon { display: flex; height: 50px; padding-bottom: 3px; border-bottom: 3px solid #c9c9c9; }
.group { display: flex; flex-direction: column; justify-content: space-between; border-right: 1px solid #d2d0ce; padding: 2px 0 0 6px; flex: none; }
.group footer { text-align: center; position: relative; margin-left: -6px; white-space: nowrap; }
.launch { position: absolute; right: 2px; bottom: 1px; }
.clip { width: 83px; } .slides { width: 69px; } .font { width: 147px; padding-left: 4px; }
.par { width: 185px; padding-left: 4px; } .draw { width: 181px; padding-left: 5px; } .edit { width: 50px; padding-left: 5px; } .acro { width: 43px; padding-left: 0; align-items: center; }
.group.acro footer { margin: 0; }
.tools { display: flex; gap: 4px; }
.draw .tools { gap: 2px; }
.big { flex-direction: column; line-height: 8px; }
.big > svg:first-child { margin-bottom: 2px; }
.big span { display: flex; align-items: center; }
.stack { display: flex; flex-direction: column; gap: 4px; }
.stack button { gap: 1px; height: 8px; }
.stack .far { margin-left: 4px; }
.off { color: #a8a6a4; }
.lines { display: flex; flex-direction: column; gap: 5px; padding-top: 3px; }
.row { display: flex; align-items: center; height: 11px; }
.fname { width: 76px; height: 11px; } .fsize { width: 23px; height: 11px; margin: 0 3px 0 1px; }
.wide { width: 13px; }
.bar { width: 1px; height: 9px; background: #d8d6d4; margin: 0 2px; }
.fmt { justify-content: space-between; padding: 0 6px 0 3px; font-size: 7px; }
.av { text-decoration: underline; text-decoration-color: #2b7cc4; }
.hl, .col { display: flex; border-bottom: 2px solid #f4ee2c; padding: 0 1px; }
.col { border-color: #d8232a; }
.par .row { width: 99px; justify-content: space-between; }
.gallery { display: flex; border: 1px solid #c8c6c4; background: #fff; height: 31px; }
.shapes { display: grid; grid-template-columns: repeat(6, 10px); align-items: center; justify-items: center; }
.gscroll { display: flex; flex-direction: column; border-left: 1px solid #c8c6c4; background: #f3f2f1; width: 7px; }
.gscroll button { flex: 1; justify-content: center; border-bottom: 1px solid #c8c6c4; }
.collapse { margin-left: auto; align-self: flex-end; padding-right: 4px; }
.work { display: flex; background: #e6e6e6; flex: 1; min-height: 0; }
.panel { width: 187px; flex: none; padding-top: 6px; display: flex; flex-direction: column; }
ol { list-style: none; margin: 0; padding: 0; display: flex; flex-direction: column; gap: 13px; }
li { display: flex; }
.num { width: 22px; padding-left: 7px; font-size: 9px; line-height: 10px; color: #444; display: flex; flex-direction: column; flex: none; margin-top: -3px; }
.num small { font: 8px/10px "DejaVu Sans", sans-serif; }
.sel .num { color: #c43e1c; }
.thumb { width: 153px; display: block; }
.sel .thumb { outline: 2px solid #c0492c; }
.sectionrow { display: flex; align-items: center; gap: 4px; padding: 12px 8px 0; font-size: 8px; }
.scroll { width: 10px; flex: none; background: #f0f0f0; display: flex; flex-direction: column; align-items: center; }
.scroll button { width: 9px; height: 9px; background: #fff; border: 1px solid #c4c4c4; justify-content: center; }
.grip { width: 9px; height: 11px; margin-top: 16px; background: #fff; border: 1px solid #ababab; }
.tall { height: 21px; }
.scroll .end { margin-top: auto; }
.scroll.right { width: 11px; padding-bottom: 12px; }
.scroll .plain { background: none; border: 0; margin-top: 4px; }
.stage { flex: 1; min-width: 0; border-left: 1px solid #d0d0d0; margin-left: 3px; padding: 3px 14px 10px 14px; }
.slide { display: block; width: 100%; overflow: visible; }
svg text { font-family: "DejaVu Sans", sans-serif; direction: rtl; fill: #111d33; }
svg .w { fill: #fff; } svg .t { fill: #22b8b4; } svg .b { font-weight: 700; } svg .mid { text-anchor: middle; }
svg .pct { font-family: "Liberation Sans", sans-serif; font-weight: 700; direction: ltr; text-anchor: middle; }
.tiny text { font-size: 2px; }
.overlay { fill: none; stroke: #777; stroke-width: .7; }
.faint { opacity: .6; }
.handle { fill: #fff; stroke: #3c3c3c; stroke-width: 1.2; }
.reg { --out: 4px; --in: 2px; --core: #444; --ink: #3c3c3c; --halo: #fff; }
.inv { --out: 4px; --in: 3px; --core: none; --ink: #fff; --halo: #333; }
.ring-out { stroke-width: var(--out); } .ring-in { stroke-width: var(--in); } .core { stroke: var(--core); }
.move { fill: var(--halo); stroke: var(--ink); stroke-width: 1; }
.status { display: flex; align-items: center; height: 14px; padding: 0 4px 0 5px; background: #f3f2f1; }
.status button { gap: 2px; }
.acc { margin-left: 20px; }
.sright { margin-left: auto; display: flex; align-items: center; gap: 11px; height: 100%; }
.views { display: flex; height: 100%; }
.views button { width: 25px; justify-content: center; }
.views .von { background: #c8c6c4; }
.zoom { display: flex; align-items: center; gap: 2px; margin-left: -8px; }
.zoom input { appearance: none; width: 62px; height: 8px; margin: 0; background: linear-gradient(#888, #888) center / 100% 1px no-repeat; }
.zoom input::-webkit-slider-thumb { appearance: none; width: 3px; height: 8px; background: #222; }
.pc { margin: 0 8px 0 4px; }
</style>
